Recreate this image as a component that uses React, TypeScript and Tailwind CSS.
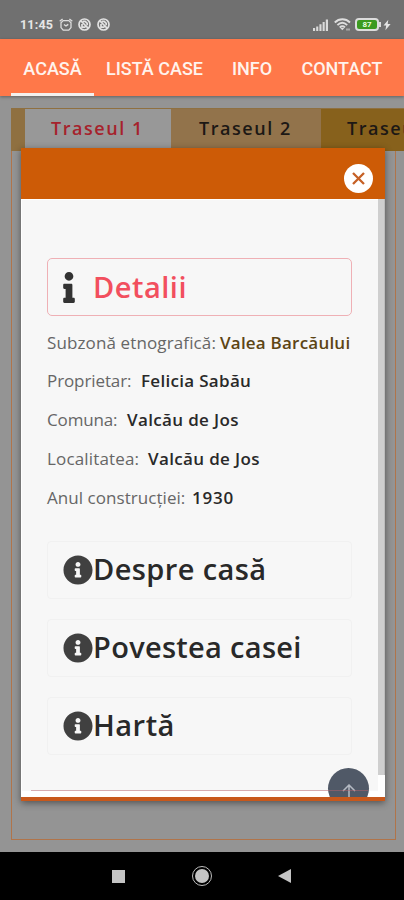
import { FaInfo, FaInfoCircle } from "react-icons/fa";

interface Detail {
  label: string;
  value: string;
  labelClass: string;
  valueClass: string;
}

const NAV_ITEMS = [
  { label: "ACASĂ", className: "w-[83px]", active: true },
  { label: "LISTĂ CASE", className: "w-[121px]", active: false },
  { label: "INFO", className: "w-[74px]", active: false },
  { label: "CONTACT", className: "w-[106px]", active: false },
];

const DETAILS: Detail[] = [
  { label: "Subzonă etnografică:", value: "Valea Barcăului", labelClass: "w-[173px] tracking-[0.12px]", valueClass: "text-[#5d4514] tracking-[0.22px]" },
  { label: "Proprietar:", value: "Felicia Sabău", labelClass: "w-[94px] tracking-[-0.1px]", valueClass: "text-[#292929] tracking-[0.3px]" },
  { label: "Comuna:", value: "Valcău de Jos", labelClass: "w-[80px] tracking-[-0.15px]", valueClass: "text-[#292929] tracking-[0.35px]" },
  { label: "Localitatea:", value: "Valcău de Jos", labelClass: "w-[101px] tracking-[0.15px]", valueClass: "text-[#292929] tracking-[0.35px]" },
  { label: "Anul construcției:", value: "1930", labelClass: "w-[145px] tracking-[0.05px]", valueClass: "text-[#292929] tracking-[0.8px]" },
];

const SECTIONS = [
  { title: "Despre casă", className: "tracking-[0.4px]" },
  { title: "Povestea casei", className: "tracking-[0.3px]" },
  { title: "Hartă", className: "tracking-[0.5px]" },
];

function MutedIcon() {
  return (
    <svg className="h-[13px] w-[13px]" viewBox="0 0 13 13" fill="none" stroke="#e2e2e2" strokeWidth="1.7">
      <circle cx="6.5" cy="6.5" r="5.5" />
      <path d="M3 3l7.3 7.3M4.8 3.3h2.4l2 2v2M4 6v3.2h3.5" />
    </svg>
  );
}

function StatusBar() {
  return (
    <div className="flex h-[39px] items-center bg-[#707070] pt-[10px] pl-[20px] font-['Roboto',sans-serif]">
      <span className="w-[33px] pt-px text-[12.5px] font-bold leading-none tracking-[0.2px] text-[#e6e6e6]">11:45</span>
      <svg className="ml-[6px] h-[14px] w-[14px]" viewBox="0 0 14 14" fill="none" stroke="#dedede" strokeWidth="1.3">
        <path d="M4.2 2.6h5.6l2.2 2.2v4.8l-2.2 2.6H4.2L2 9.6V4.8zM.7 3.3L3.6.9M13.3 3.3L10.4.9M5 6.4l2 1.5 2.3-1.5" />
      </svg>
      <div className="ml-[5px] flex gap-[6px]">
        <MutedIcon />
        <MutedIcon />
      </div>
      <svg className="ml-[203px] h-[12px] w-[15px]" viewBox="0 0 15 12" fill="#dadada">
        <path d="M0 9h2.1v3H0zM3.2 7.4h2.1V12H3.2zM6.4 5.2h2.1V12H6.4zM9.6 2.9h2.1V12H9.6zM12.8.5H15V12h-2.2z" />
      </svg>
      <svg className="ml-[6px] h-[13px] w-[17px]" viewBox="0 0 17 13" fill="none" stroke="#dedede" strokeWidth="1.9">
        <path d="M.8 4.5C5.2.2 11.6.2 16 4.5M3.4 7.1c3-2.8 6.8-2.8 9.8 0M5.7 9.4c1.7-1.4 3.7-1.4 5.3 0" />
        <path d="M6.3 10l2 2.3 2-2.3z" fill="#dedede" stroke="none" />
        <path d="M13 10.5v2M15 10.5v2" strokeWidth="1" />
      </svg>
      <div className="ml-[4px] flex h-[13px] w-[24px] items-center justify-center rounded-[4px] border-2 border-[#dcdcdc] bg-[#3b9a20] text-[8px] font-bold leading-none text-[#e9ffdf]">
        87
      </div>
      <div className="h-[5px] w-[2px] bg-[#dcdcdc]" />
      <svg className="ml-[2px] h-[12px] w-[8px]" viewBox="0 0 8 12" fill="#e4e4e4">
        <path d="M5.3.7L.5 6.6h2.7l-.8 4.7L7.6 5H4.7z" />
      </svg>
    </div>
  );
}

function NavBar() {
  return (
    <nav className="relative flex h-[57px] bg-[#ff7849] pl-[11px] font-['Roboto',sans-serif] shadow-[0_1px_3px_rgba(0,0,0,0.35)]">
      {NAV_ITEMS.map((item) => (
        <div key={item.label} className={`flex shrink-0 flex-col items-center ${item.className}`}>
          <span className="flex h-[54px] items-center pt-[4px] text-[18px] font-medium whitespace-nowrap text-[#fff3ed]">
            {item.label}
          </span>
          {item.active && <div className="h-[3px] w-full bg-[#f3f0ee]" />}
        </div>
      ))}
    </nav>
  );
}

function RouteTabs() {
  return (
    <div className="flex h-[43px] w-[393px] overflow-hidden bg-[#8f7041] pl-[14px] pt-px text-[18px] font-semibold tracking-[1.55px] text-[#1c1815]">
      <div className="flex w-[146px] shrink-0 items-center bg-[#989898] pb-[3px] pl-[26px] text-[#a6222c]">Traseul 1</div>
      <div className="flex w-[150px] shrink-0 items-center bg-[#92734b] pb-[3px] pl-[28px]">Traseul 2</div>
      <div className="flex w-[150px] shrink-0 items-center bg-[#87611c] pb-[3px] pl-[26px]">Traseul 3</div>
    </div>
  );
}

function DetailsDialog() {
  return (
    <div className="absolute top-[148px] left-[21px] flex h-[653px] w-[364px] flex-col overflow-hidden border-b-4 border-[#c8581b] bg-white shadow-[0_2px_7px_rgba(0,0,0,0.45)]">
      <div className="flex h-[51px] shrink-0 items-center justify-end bg-[#cd5b06] pt-[9px] pr-[12px]">
        <button className="flex h-[29px] w-[29px] items-center justify-center rounded-full bg-white">
          <svg className="h-[13px] w-[13px]" viewBox="0 0 13 13" stroke="#c66025" strokeWidth="2.3">
            <path d="M1 1l11 11M12 1L1 12" />
          </svg>
        </button>
      </div>

      <div className="flex min-h-0 flex-1 pl-px">
        <div className="mt-px h-[591px] flex-1 bg-[#f7f7f7] px-[25px] pt-[58px]">
          <div className="flex h-[58px] w-[305px] items-center rounded-[5px] border border-[#efb0b5] pl-[9px]">
            <FaInfo className="h-[31px] w-[24px] text-[#333]" />
            <h2 className="ml-[12px] pb-[2px] text-[29px] font-semibold leading-none tracking-[0.5px] text-[#f24f5e]">Detalii</h2>
          </div>

          <div className="mt-[7px]">
            {DETAILS.map((d) => (
              <div key={d.label} className="flex h-[38.8px] items-center text-[17px] whitespace-nowrap">
                <span className={`shrink-0 text-[#666] ${d.labelClass}`}>{d.label}</span>
                <span className={`font-semibold ${d.valueClass}`}>{d.value}</span>
              </div>
            ))}
          </div>

          <div className="mt-[24px] flex flex-col gap-[20px]">
            {SECTIONS.map((s) => (
              <div key={s.title} className="flex h-[58px] w-[305px] items-center rounded-[4px] border border-[#f1f1f1] pl-[15px]">
                <FaInfoCircle className="h-[30px] w-[30px] shrink-0 text-[#404040]" />
                <h2 className={`pb-[2px] text-[29px] font-semibold leading-none whitespace-nowrap text-[#292929] ${s.className}`}>
                  {s.title}
                </h2>
              </div>
            ))}
          </div>
        </div>
        <div className="h-[576px] w-[7px] shrink-0 border-r border-[#bdbdbd] bg-[#cfcfcf]" />
      </div>

      {/* Back-to-top button, cut off by the dialog's lower edge */}
      <button className="absolute top-[620px] left-[307px] flex h-[41px] w-[41px] items-center justify-center rounded-full bg-[#505967]">
        <svg className="mt-[6px] h-[15px] w-[14px]" viewBox="0 0 14 15" fill="none" stroke="#b4bac3" strokeWidth="1.5">
          <path d="M7 15V1M1 7l6-6 6 6" />
        </svg>
      </button>
      <div className="absolute top-[642px] left-[10px] h-px w-[337px] bg-[#b5616b]/50" />
    </div>
  );
}

function SystemNav() {
  return (
    <div className="flex h-[48px] items-center bg-black pl-[112px]">
      <div className="h-[13px] w-[13px] bg-[#c4c4c4]" />
      <div className="ml-[67px] flex h-[20px] w-[20px] items-center justify-center rounded-full border-[1.5px] border-[#bdbdbd]">
        <div className="h-[14px] w-[14px] rounded-full bg-[#c4c4c4]" />
      </div>
      <svg className="ml-[66px] h-[14px] w-[13px]" viewBox="0 0 13 14" fill="#c4c4c4">
        <path d="M13 0v14L0 7z" />
      </svg>
    </div>
  );
}

export default function App() {
  return (
    <div className="relative flex h-[900px] w-[404px] flex-col overflow-hidden bg-[#949494] font-['Open_Sans',sans-serif]">
      <StatusBar />
      <NavBar />
      <main className="flex-1 pt-[12px] pl-[11px]">
        <div className="h-[732px] w-[385px] border border-[#b0744a]">
          <div className="-mt-px -ml-px">
            <RouteTabs />
          </div>
        </div>
      </main>
      <SystemNav />
      <DetailsDialog />
    </div>
  );
}
